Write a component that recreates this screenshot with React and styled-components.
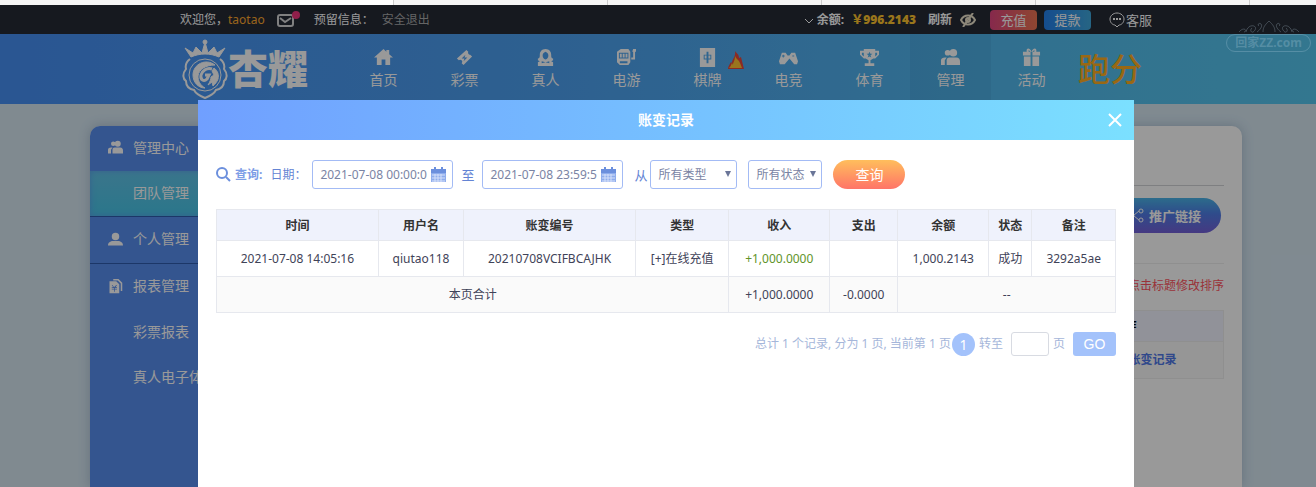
import React, { useState } from "react";
import styled, { createGlobalStyle } from "styled-components";

const NAV_ITEMS = [
  { label: "首页", icon: "home" },
  { label: "彩票", icon: "ticket" },
  { label: "真人", icon: "person" },
  { label: "电游", icon: "slot" },
  { label: "棋牌", icon: "tile", hot: true },
  { label: "电竞", icon: "pad" },
  { label: "体育", icon: "cup" },
  { label: "管理", icon: "users", active: true },
  { label: "活动", icon: "gift" },
];

const SIDE_ITEMS = [
  { label: "管理中心", icon: "users" },
  { label: "团队管理", active: true },
  { label: "个人管理", icon: "user", line: true },
  { label: "报表管理", icon: "report", line: true },
  { label: "彩票报表" },
  { label: "真人电子体育报表" },
];

const COLUMNS = [
  { title: "时间", width: "18%" },
  { title: "用户名", width: "9.5%" },
  { title: "账变编号", width: "19.1%" },
  { title: "类型", width: "10.4%" },
  { title: "收入", width: "11.2%" },
  { title: "支出", width: "7.6%" },
  { title: "余额", width: "10.1%" },
  { title: "状态", width: "4.8%" },
  { title: "备注", width: "9.3%" },
];

const RECORDS = [
  {
    id: "20210708VCIFBCAJHK",
    time: "2021-07-08 14:05:16",
    user: "qiutao118",
    type: "[+]在线充值",
    income: "+1,000.0000",
    outcome: "",
    balance: "1,000.2143",
    status: "成功",
    note: "3292a5ae",
  },
];

const ICONS = {
  home: <path d="M10 1 0 10h3v8h5v-6h4v6h5v-8h3L16 6.500V2h-3v2z" />,
  ticket: (
    <path
      fillRule="evenodd"
      d="M12 2l2 2a2 2 0 0 0 2 3l2 2-9 9-2-2a2 2 0 0 0-3-3l-2-2zM11 7l-4 4h3l-1 3 4-4h-3z"
    />
  ),
  person: (
    <path
      fillRule="evenodd"
      d="M10 1c4 0 6 3 6 6 0 2 0 4 2 4v2l-2 1 2 1v4H2v-4l2-1-2-1v-2c2 0 2-2 2-4 0-3 2-6 6-6zm0 3C8 5 7 6 7 8s1 4 3 4 3-2 3-4-1-3-3-4zM6 14v2l4-1 4 1v-2l-4 1z"
    />
  ),
  slot: (
    <path
      fillRule="evenodd"
      d="M4 1h8l2 3v11l-2 3H3l-3-3V4zM2 5v6h10V5zM3 6h2v4H3zm3 0h2v4H6zm3 0h2v4H9zM3 14v2h8v-2zM17 1h3v3h-1v8h-4v-2h2V4h-1z"
    />
  ),
  tile: (
    <path
      fillRule="evenodd"
      d="M2 0h16v20H2zM9 4v3H6v5h3v4h2v-4h3V7h-3V4zM7 8h2v3H7zm4 0h2v3h-2z"
    />
  ),
  pad: (
    <path
      fillRule="evenodd"
      d="M3 5h4l2 3h2l2-3h4l3 9-1 3h-3l-5-6-5 6H1l-1-3zM4 7v1H3v1h1v1h1V9h1V8H5V7zm10 1v1h2V8z"
    />
  ),
  cup: (
    <path
      fillRule="evenodd"
      d="M4 1h12v2h4v4l-4 4h-2l-3 2v3h4v3H5v-3h4v-3l-3-2H4L0 7V3h4zM2 5v2l2 2V5zm14 0v4l2-2V5zm-6-1L9 6H7l2 2-1 2 2-1 2 1-1-2 2-2h-2z"
    />
  ),
  users: (
    <>
      <circle cx="7" cy="5" r="3" />
      <circle cx="13" cy="5" r="4" stroke="none" />
      <path d="M4 10h2l-2 3v5H0v-5c0-2 2-3 4-3z" />
      <path d="M9 10h7c3 0 4 2 4 4v4H6v-5c0-2 1-3 3-3z" />
    </>
  ),
  user: <path d="M10 1a5 5 0 1 1 0 10A5 5 0 0 1 10 1zM7 12h6c4 0 7 2 7 6H0c0-4 3-6 7-6z" />,
  gift: (
    <path
      fillRule="evenodd"
      d="M10 4C8-1 4 0 5 4H1v4h8V4h2v4h8V4h-4c1-4-3-5-5 0zM7 2l2 2H7zm6 0v2h-2zM2 9h7v10H2zm9 0h7v10h-7z"
    />
  ),
  report: (
    <path
      fillRule="evenodd"
      d="M7 0h7l5 5v11h-2V6l-4-4H7zM2 3h9l4 4v12H2zm3 5 2 3H5v1h3v1H5v1h3v3h1v-3h3v-1H9v-1h3v-1h-2l2-3h-1l-3 3-2-3z"
    />
  ),
};

const Icon = ({ name, size = 20 }) => (
  <svg width={size} height={size} viewBox="0 0 20 20" fill="currentColor" aria-hidden="true">
    {ICONS[name]}
  </svg>
);

const Emblem = () => (
  <svg width="46" height="60" viewBox="0 0 46 60" fill="none" stroke="#fff" aria-hidden="true">
    <path
      d="M9 18 3 9l8 5 3-6 6 6 3-11 3 11 6-6 3 6 8-5-6 9c-9-4-19-4-28 0z"
      fill="#fff"
      strokeWidth="1"
    />
    <circle cx="23" cy="3" r="2" fill="#fff" />
    <path
      d="M8 20c-4 3-5 6-4 10-4 5-3 10 0 12 0 5 3 8 8 9 2 4 6 6 11 8 5-2 9-4 11-8 5-1 8-4 8-9 3-2 4-7 0-12 1-4 0-7-4-10"
      strokeWidth="2"
    />
    <circle cx="23" cy="36" r="16" strokeWidth="1" />
    <path
      d="M33 26c-9-7-22-1-22 10 0 7 5 13 12 13-5-3-7-7-7-12 1-7 8-11 17-11z"
      fill="#fff"
    />
    <path d="M30 30c-5-2-10 2-11 6-1 5 3 7 6 4l2-4h-4" strokeWidth="3" />
    <path d="M32 29c4 3 5 7 4 11-1 3-3 5-5 7l-1-4-4 3c2-3 3-6 3-8l3-2-2-4z" fill="#fff" />
  </svg>
);

const Calendar = () => (
  <svg width="15" height="16" viewBox="0 0 15 16" aria-hidden="true">
    <path d="M0 2h3V0h2v2h5V0h2v2h3v4H0z" fill="#6b8fdd" />
    <path d="M0 6h15v9H0z" fill="#8fadec" />
    <path d="M1 8h13M1 11h13M1 14h13M4 7v8M7 7v8M10 7v8" stroke="#d5e0fa" />
  </svg>
);

const App = () => {
  const [start, setStart] = useState("2021-07-08 00:00:00");
  const [end, setEnd] = useState("2021-07-08 23:59:59");
  const [open, setOpen] = useState(true);

  return (
    <Page>
      <GlobalStyle />
      <TabStrip>
        <Tab $current />
        <Tab />
        <Tab />
        <Tab />
        <Tab />
      </TabStrip>
      <Site>
        <TopBar>
          <Inner>
            <TopGroup>
              <span>
                欢迎您，<Account>taotao</Account>
              </span>
              <Mail type="button" aria-label="消息">
                <svg width="24" height="18" viewBox="0 0 24 18" fill="none" stroke="#d5d5d5" strokeWidth="2">
                  <rect x="2" y="4" width="15" height="11" rx="2" />
                  <path d="m4 7 5 4 6-4" />
                  <circle cx="20" cy="4" r="4" fill="#f0357c" stroke="none" />
                </svg>
              </Mail>
              <span>预留信息：</span>
              <Logout href="#logout">安全退出</Logout>
            </TopGroup>
            <TopGroup $right>
              <svg width="9" height="12" viewBox="0 0 9 12" fill="none" stroke="#fff">
                <path d="m1 5 4 4 4-4" />
              </svg>
              <Balance>
                余额: <b>￥996.2143</b>
              </Balance>
              <Refresh type="button">刷新</Refresh>
              <svg width="16" height="14" viewBox="0 0 16 14" fill="none" stroke="#ece3cb" strokeWidth="2">
                <path d="M1 7c3-6 11-6 14 0-3 6-11 6-14 0zM13 0 3 14" />
                <circle cx="8" cy="7" r="2" />
              </svg>
              <Money type="button">充值</Money>
              <Money type="button" $blue>
                提款
              </Money>
              <Service href="#service">
                <svg width="16" height="16" viewBox="0 0 16 16" fill="none" stroke="#fff">
                  <path d="M8 1c4 0 7 3 7 6 0 4-3 6-5 6l-2 2-2-2c-2 0-5-2-5-6 0-3 3-6 7-6z" />
                  <path d="M4 7h2m1 0h2m1 0h2" strokeWidth="2" />
                </svg>
                客服
              </Service>
            </TopGroup>
          </Inner>
        </TopBar>
        <Header>
          <Inner>
            <Logo href="#home">
              <Emblem />
              杏耀
            </Logo>
            <Nav>
              {NAV_ITEMS.map((item) => (
                <NavLink key={item.label} href={`#${item.icon}`} $active={item.active}>
                  <Icon name={item.icon} size={19} />
                  {item.label}
                  {item.hot && (
                    <Hot width="16" height="19" viewBox="0 0 16 19" aria-hidden="true">
                      <path d="M7 0c2 3 4 3 4 7l2-1 3 12H0c0-3 2-5 3-7l1 1c0-4 4-6 3-12z" fill="#e8473c" />
                      <path d="M7 5c1 3 4 4 5 7l2 5H1c2-2 2-3 3-5l1 2c0-3 2-4 2-9z" fill="#ffc431" />
                    </Hot>
                  )}
                </NavLink>
              ))}
            </Nav>
            <Promo href="#paofen">跑分</Promo>
          </Inner>
        </Header>
        <Main>
          <Board>
            <Sidebar>
              {SIDE_ITEMS.map((item) => (
                <SideLink key={item.label} href="#side" $active={item.active} $line={item.line}>
                  <SideIcon>{item.icon && <Icon name={item.icon} size={15} />}</SideIcon>
                  {item.label}
                </SideLink>
              ))}
            </Sidebar>
            <Content>
              <ShareRow>
                <Share type="button">
                  <svg width="15" height="15" viewBox="0 0 15 15" fill="none" stroke="#fff" strokeWidth="1">
                    <path d="m5 7 5-4M5 8l5 4" />
                    <circle cx="3" cy="7" r="2" />
                    <circle cx="12" cy="3" r="2" />
                    <circle cx="12" cy="12" r="2" />
                  </svg>
                  推广链接
                </Share>
              </ShareRow>
              <Tip>点击标题修改排序</Tip>
              <TeamTable>
                <thead>
                  <tr>
                    <th>用户名</th>
                    <th>操作</th>
                  </tr>
                </thead>
                <tbody>
                  <tr>
                    <td>taotao</td>
                    <td>
                      <a href="#team">团队余额</a>
                      <a href="#log">账变记录</a>
                    </td>
                  </tr>
                </tbody>
              </TeamTable>
            </Content>
          </Board>
        </Main>
        {open && (
          <Overlay>
            <Watermark>
              <svg width="60" height="14" viewBox="0 0 60 14" fill="none" stroke="currentColor" aria-hidden="true">
                <path d="M0 12c5-6 9-1 5 0m2 0c2-9 12-7 9-2s-6 0-3-2m5 4c3-2 6-6 4-8s-4 1-2 2m4 6c0-5 2-7 6-11 4 4 6 6 6 11M60 12c-5-6-9-1-5 0m-2 0c-2-9-12-7-9-2s6 0 3-2m-5 4c-3-2-6-6-4-8s4 1 2 2" />
              </svg>
              <span>回家ZZ.com</span>
            </Watermark>
            <Dialog role="dialog" aria-labelledby="dialog-title">
              <DialogHead>
                <h2 id="dialog-title">账变记录</h2>
                <Close type="button" aria-label="关闭" onClick={() => setOpen(false)}>
                  <svg width="14" height="14" viewBox="0 0 14 14" stroke="#fff" strokeWidth="2">
                    <path d="m1 1 12 12M13 1 1 13" />
                  </svg>
                </Close>
              </DialogHead>
              <DialogBody>
                <Filter onSubmit={(e) => e.preventDefault()}>
                  <FilterTitle>
                    <svg width="15" height="15" viewBox="0 0 15 15" fill="none" stroke="#6b8fdd" strokeWidth="2">
                      <circle cx="6" cy="6" r="5" />
                      <path d="m10 10 4 4" />
                    </svg>
                    查询:
                  </FilterTitle>
                  <label htmlFor="start">日期：</label>
                  <DateBox>
                    <input id="start" value={start} onChange={(e) => setStart(e.target.value)} />
                    <Calendar />
                  </DateBox>
                  <Joint htmlFor="end">至</Joint>
                  <DateBox>
                    <input id="end" value={end} onChange={(e) => setEnd(e.target.value)} />
                    <Calendar />
                  </DateBox>
                  <From htmlFor="type">从</From>
                  <SelectBox $width={87}>
                    <select id="type">
                      <option>所有类型</option>
                    </select>
                  </SelectBox>
                  <SelectBox $width={74} $spaced>
                    <select aria-label="状态">
                      <option>所有状态</option>
                    </select>
                  </SelectBox>
                  <Search type="submit">查询</Search>
                </Filter>
                <RecordTable>
                  <thead>
                    <tr>
                      {COLUMNS.map((col) => (
                        <th key={col.title} style={{ width: col.width }}>
                          {col.title}
                        </th>
                      ))}
                    </tr>
                  </thead>
                  <tbody>
                    {RECORDS.map((row) => (
                      <tr key={row.id}>
                        <td>{row.time}</td>
                        <td>{row.user}</td>
                        <td>{row.id}</td>
                        <td>{row.type}</td>
                        <Income>{row.income}</Income>
                        <td>{row.outcome}</td>
                        <td>{row.balance}</td>
                        <td>{row.status}</td>
                        <td>{row.note}</td>
                      </tr>
                    ))}
                  </tbody>
                  <tfoot>
                    <tr>
                      <td colSpan={4}>本页合计</td>
                      <td>+1,000.0000</td>
                      <td>-0.0000</td>
                      <td colSpan={3}>--</td>
                    </tr>
                  </tfoot>
                </RecordTable>
                <Pager>
                  <span>总计 1 个记录, 分为 1 页, 当前第 1 页</span>
                  <PageNumber href="#1">1</PageNumber>
                  <label htmlFor="goto">转至</label>
                  <PageInput id="goto" />
                  <span>页</span>
                  <Go type="button">GO</Go>
                </Pager>
              </DialogBody>
            </Dialog>
          </Overlay>
        )}
      </Site>
    </Page>
  );
};

export default App;

const GlobalStyle = createGlobalStyle`
  * {
    box-sizing: border-box;
  }

  body {
    margin: 0;
    font-family: "Noto Sans", "Noto Sans CJK SC", sans-serif;
    font-size: 12px;
    line-height: 18px;
  }

  a {
    color: inherit;
    text-decoration: none;
  }

  button, input, select {
    font: inherit;
    color: inherit;
    border: 0;
    padding: 0;
    background: none;
  }

  button {
    cursor: pointer;
  }

  svg {
    flex: none;
  }
`;

const Page = styled.div`
  display: flex;
  flex-direction: column;
  min-height: 100vh;
`;

const TabStrip = styled.div`
  display: flex;
  height: 5px;
  padding-left: 180px;
  background: #f5f5f5;
  overflow: hidden;
`;

const Tab = styled.div`
  flex: none;
  width: 214px;
  border-right: 1px solid #ccc;
  background: ${(p) => (p.$current ? "#fff" : "#f5f5f5")};
`;

const Site = styled.div`
  position: relative;
  flex: 1;
  display: flex;
  flex-direction: column;
  overflow: hidden;
  background: #d5e6f1;
`;

const TopBar = styled.div`
  padding-left: 16px;
  background: #252a35;
  color: #fff;
`;

const Inner = styled.div`
  display: flex;
  max-width: 972px;
  margin: 0 auto;
`;

const TopGroup = styled.div`
  display: flex;
  align-items: center;
  height: 29px;
  ${(p) => p.$right && "margin-left: auto;"}
`;

const Account = styled.span`
  color: #ffa92e;
`;

const Mail = styled.button`
  display: flex;
  margin: 0 14px 0 11px;
`;

const Logout = styled.a`
  margin-left: 8px;
  color: #a8a8a8;
`;

const Balance = styled.span`
  margin-left: 4px;
  font-weight: 700;

  b {
    margin-left: 4px;
    color: #ffc52e;
  }
`;

const Refresh = styled.button`
  margin: 0 8px 0 12px;
  font-weight: 700;
`;

const Money = styled.button`
  width: 47px;
  height: 20px;
  margin-left: ${(p) => (p.$blue ? 7 : 14)}px;
  border-radius: 4px;
  font-size: 13px;
  background: ${(p) =>
    p.$blue
      ? "linear-gradient(90deg, #2380ee, #40a8dc)"
      : "linear-gradient(90deg, #e0457f, #ee7552)"};
`;

const Service = styled.a`
  display: flex;
  align-items: center;
  gap: 1px;
  margin-left: 18px;
  font-size: 13px;
`;

const Header = styled.header`
  padding-left: 16px;
  background: linear-gradient(90deg, #468ff4, #4da2f0 45%, #54c0ee 85%, #56c6ee);
  color: #fff;
`;

const Logo = styled.a`
  display: flex;
  align-items: center;
  width: 163px;
  height: 70px;
  padding-left: 2px;
  font-size: 40px;
  font-weight: 900;
  line-height: 60px;
`;

const Nav = styled.nav`
  display: flex;
`;

const NavLink = styled.a`
  position: relative;
  display: flex;
  flex-direction: column;
  align-items: center;
  gap: 4px;
  width: 81px;
  padding-top: 14px;
  font-size: 14px;
  background: ${(p) => (p.$active ? "rgba(0, 40, 80, 0.06)" : "none")};
`;

const Hot = styled.svg`
  position: absolute;
  top: 17px;
  right: 4px;
`;

const Promo = styled.a`
  align-self: center;
  margin-left: 6px;
  color: #ffad22;
  font-size: 32px;
  font-weight: 500;
  line-height: 48px;
  white-space: nowrap;
`;

const Main = styled.main`
  flex: 1;
  display: flex;
  justify-content: center;
  padding: 22px 0 0 16px;
`;

const Board = styled.div`
  flex: none;
  display: flex;
  width: 1152px;
  border-radius: 10px 10px 0 0;
  background: #fff;
  overflow: hidden;
  box-shadow: 0 0 12px rgba(60, 90, 130, 0.3);
`;

const Sidebar = styled.nav`
  flex: none;
  width: 160px;
  background: #588eef;
`;

const SideLink = styled.a`
  display: flex;
  align-items: center;
  height: ${(p) => (p.$line ? 47 : 45)}px;
  padding: 0 0 2px 18px;
  color: #fff;
  font-size: 14px;
  white-space: nowrap;
  border-top: ${(p) => (p.$line ? "1px solid #2f5cae" : "0")};
  background: ${(p) => (p.$active ? "linear-gradient(#62c4e8, #48c6e8)" : "none")};
  box-shadow: ${(p) => (p.$active ? "inset 0 0 6px #5aa0ec" : "none")};
`;

const SideIcon = styled.span`
  display: flex;
  width: 25px;
`;

const Content = styled.section`
  flex: 1;
  padding: 59px 18px 0;
`;

const ShareRow = styled.div`
  display: flex;
  justify-content: flex-end;
  padding: 12px 3px 30px;
  border-top: 1px solid #d2d4d8;
  border-bottom: 1px solid #eee;
`;

const Share = styled.button`
  display: flex;
  align-items: center;
  gap: 5px;
  height: 35px;
  padding: 0 20px;
  border-radius: 18px;
  color: #fff;
  font-size: 13px;
  font-weight: 700;
  background: linear-gradient(#4ab4e8, #4f7ee8 45%, #7460d8);
`;

const Tip = styled.p`
  margin: 13px 0 15px;
  color: #ff5560;
  text-align: right;
`;

const TeamTable = styled.table`
  width: 100%;
  border-collapse: collapse;

  th,
  td {
    padding: 6px 0;
    border: 1px solid #eee;
    text-align: center;
    background: #fafafa;
  }

  th {
    background: #f2f4ff;
  }

  td {
    padding: 9px 0;
  }

  th:last-child {
    width: 198px;
  }

  a {
    color: #5078e8;
    font-weight: 700;
  }

  a + a {
    margin-left: 8px;
  }
`;

const Overlay = styled.div`
  position: absolute;
  inset: 0;
  display: flex;
  justify-content: center;
  padding: 95px 0 0 16px;
  background: rgba(0, 0, 0, 0.4);
`;

const Watermark = styled.div`
  position: absolute;
  top: 15px;
  right: 5px;
  display: flex;
  flex-direction: column;
  align-items: center;
  color: rgba(190, 215, 230, 0.25);

  span {
    padding: 0 8px;
    border: 1px solid currentColor;
    border-radius: 9px;
    font-weight: 700;
    line-height: 16px;
  }
`;

const Dialog = styled.div`
  display: flex;
  flex-direction: column;
  width: 936px;
  background: #fff;
`;

const DialogHead = styled.div`
  position: relative;
  display: flex;
  align-items: center;
  justify-content: center;
  height: 40px;
  color: #fff;
  background: linear-gradient(90deg, #709fff, #7be0ff);

  h2 {
    margin: 0;
    font-size: 14px;
  }
`;

const Close = styled.button`
  position: absolute;
  right: 12px;
  display: flex;
`;

const DialogBody = styled.div`
  padding: 20px 18px;
`;

const Filter = styled.form`
  display: flex;
  align-items: center;
  height: 29px;
  color: #6484d4;
`;

const FilterTitle = styled.span`
  display: flex;
  align-items: center;
  gap: 4px;
  margin-right: 8px;
  font-weight: 700;
  color: #7d9de6;
`;

const DateBox = styled.div`
  display: flex;
  align-items: center;
  width: 141px;
  height: 29px;
  margin-left: 6px;
  padding: 0 6px 0 7px;
  border: 1px solid #a3bbf5;
  border-radius: 3px;
  color: #7a84a4;

  input {
    flex: 1;
    min-width: 0;
    margin-right: 4px;
    outline: 0;
  }
`;

const Joint = styled.label`
  margin: 0 2px 0 8px;
  font-size: 13px;
`;

const From = styled.label`
  margin: 0 3px 0 11px;
  font-size: 13px;
`;

const SelectBox = styled.div`
  position: relative;
  width: ${(p) => p.$width}px;
  margin-left: ${(p) => (p.$spaced ? 11 : 0)}px;
  color: #7a84a4;

  select {
    appearance: none;
    width: 100%;
    height: 29px;
    padding: 0 7px;
    border: 1px solid #a3bbf5;
    border-radius: 3px;
    outline: 0;
  }

  &::after {
    content: "";
    position: absolute;
    top: 11px;
    right: 6px;
    border: 3px solid transparent;
    border-top: 6px solid #6a7598;
    border-bottom: 0;
    pointer-events: none;
  }
`;

const Search = styled.button`
  width: 72px;
  height: 29px;
  margin-left: 11px;
  border-radius: 15px;
  color: #fff;
  font-size: 14px;
  background: linear-gradient(#ffbe5c, #ff7468);
`;

const RecordTable = styled.table`
  width: 100%;
  margin-top: 20px;
  border-collapse: collapse;
  table-layout: fixed;
  color: #3f4358;

  th,
  td {
    height: 36px;
    padding: 0;
    border: 1px solid #e6e8ee;
    text-align: center;
    white-space: nowrap;
  }

  th {
    height: 31px;
    padding-top: 2px;
    color: #333;
    background: #eff2fc;
  }

  tfoot td {
    background: #fafafa;
  }
`;

const Income = styled.td`
  color: #62942a;
`;

const Pager = styled.div`
  display: flex;
  align-items: center;
  justify-content: flex-end;
  margin-top: 19px;
  color: #a5b6da;
`;

const PageNumber = styled.a`
  width: 23px;
  margin: 0 4px 0 1px;
  border-radius: 50%;
  color: #fff;
  font-size: 14px;
  line-height: 23px;
  text-align: center;
  background: #a3c2fb;
`;

const PageInput = styled.input`
  width: 38px;
  height: 24px;
  margin: 0 4px 0 8px;
  border: 1px solid #d8dbe2;
  border-radius: 3px;
`;

const Go = styled.button`
  width: 43px;
  height: 24px;
  margin-left: 8px;
  border-radius: 3px;
  color: #fff;
  font-family: "Liberation Sans", Arial, sans-serif;
  font-size: 14px;
  background: #a3c2fb;
`;
